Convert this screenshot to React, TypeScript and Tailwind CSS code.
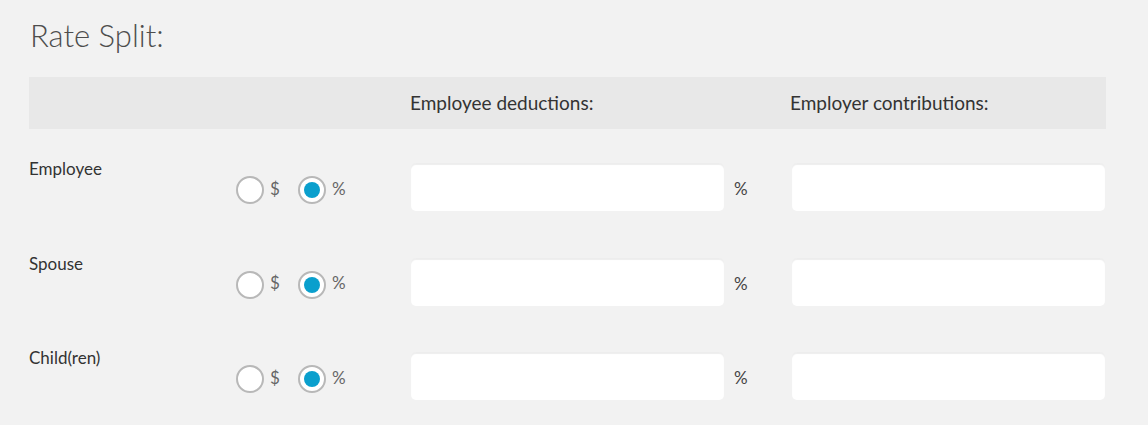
import { useState } from "react";

type Unit = "$" | "%";

const rows = ["Employee", "Spouse", "Child(ren)"];

function Radio({ checked, onClick, label }: { checked: boolean; onClick: () => void; label: string }) {
  return (
    <button type="button" onClick={onClick} className="flex items-center gap-[6px]">
      <span className="flex h-[28px] w-[28px] items-center justify-center rounded-full border-2 border-[#b8b8b8] bg-white">
        {checked && <span className="h-[16px] w-[16px] rounded-full bg-[#0a9fcd]" />}
      </span>
      <span className="-mt-[3px] text-[17px] text-[#666]">{label}</span>
    </button>
  );
}

function Field() {
  return (
    <input
      type="text"
      className="h-[48px] w-[313px] rounded-[5px] bg-white px-3 text-[16px] text-[#333] shadow-[inset_0_2px_1px_rgba(0,0,0,0.07)] outline-none"
    />
  );
}

function RateRow({ name }: { name: string }) {
  const [unit, setUnit] = useState<Unit>("%");
  return (
    <div className="flex h-[48px] items-start">
      <div className="-mt-[4px] w-[207px] text-[17px] leading-[20px] text-[#333]">{name}</div>
      <div className="mt-[13px] flex w-[175px] items-center gap-[18px]">
        <Radio checked={unit === "$"} onClick={() => setUnit("$")} label="$" />
        <Radio checked={unit === "%"} onClick={() => setUnit("%")} label="%" />
      </div>
      <Field />
      <div className="flex h-[48px] w-[68px] items-center pl-[10px] pt-[4px] text-[17px] text-[#444]">%</div>
      <Field />
    </div>
  );
}

export default function App() {
  return (
    <div className="min-h-screen bg-[#f2f2f2] pl-[29px] font-['Lato','Liberation_Sans',sans-serif]">
      <h2 className="pl-[1px] pt-[17px] text-[31px] font-light leading-[36px] text-[#4d4d4d]">Rate Split:</h2>
      <div className="mt-[24px] flex h-[52px] w-[1077px] items-center bg-[#e8e8e8] text-[19px] text-[#333]">
        <span className="w-[381px]" />
        <span className="w-[380px]">Employee deductions:</span>
        <span>Employer contributions:</span>
      </div>
      <div className="mt-[34px] flex flex-col gap-[46.5px]">
        {rows.map((r) => (
          <RateRow key={r} name={r} />
        ))}
      </div>
    </div>
  );
}
